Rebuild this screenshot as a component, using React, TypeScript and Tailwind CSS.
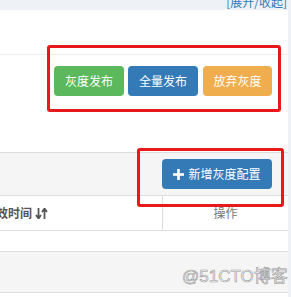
import React from 'react';

const PlusIcon: React.FC = () => (
  <svg width="11" height="11" viewBox="0 0 11 11" className="shrink-0">
    <rect x="4.2" y="0" width="2.6" height="11" fill="#fff" />
    <rect x="0" y="4.2" width="11" height="2.6" fill="#fff" />
  </svg>
);

const SortIcon: React.FC = () => (
  <svg width="13" height="11" viewBox="0 0 13 11" className="shrink-0">
    <path d="M3.5 0v9M1 7l2.5 3.5L6 7" stroke="#555" strokeWidth="1.8" fill="none" />
    <path d="M9.5 11V2M7 4l2.5-3.5L12 4" stroke="#555" strokeWidth="1.8" fill="none" />
  </svg>
);

const App: React.FC = () => {
  const font = "font-['Noto_Sans_CJK_SC','Noto_Sans',sans-serif]";
  return (
    <div className={`relative w-[291px] h-[297px] overflow-hidden bg-[#eef1f5] ${font}`}>
      {/* top bar with clipped toggle link */}
      <div className="h-[10px] overflow-hidden flex justify-end pr-[4px]">
        <span className="text-[12px] leading-[12px] -mt-[4px] text-[#337ab7]">[展开/收起]</span>
      </div>

      <div className="flex">
        <div className="w-[288px] bg-white">
          <div className="h-[45px] border-b border-[#eee]" />

          <div className="h-[97px] pt-[11px] pr-[16px] flex justify-end items-start">
            <button className="w-[70px] h-[30px] rounded-[4px] bg-[#5cb85c] text-white text-[12px]">灰度发布</button>
            <button className="ml-[4px] w-[70px] h-[30px] rounded-[4px] bg-[#337ab7] text-white text-[12px]">全量发布</button>
            <button className="ml-[5px] w-[69px] h-[30px] rounded-[4px] bg-[#f0ad4e] text-white text-[12px]">放弃灰度</button>
          </div>

          <div className="h-[43px] border-t border-[#ddd] bg-[#f5f5f5] pt-[6px] pr-[16px] flex justify-end items-start">
            <button className="w-[110px] h-[30px] rounded-[4px] bg-[#337ab7] text-white text-[12px] flex items-center justify-center gap-[4px]">
              <PlusIcon />
              <span>新增灰度配置</span>
            </button>
          </div>

          <div className="flex h-[36px] border-y border-[#ddd]">
            <div className="w-[163px] border-r border-[#ddd] flex items-center overflow-hidden">
              <span className="-ml-[16px] flex items-center gap-[3px] text-[12px] font-bold text-[#555] whitespace-nowrap">
                生效时间
                <SortIcon />
              </span>
            </div>
            <div className="flex-1 flex items-center justify-center text-[12px] text-[#777]">操作</div>
          </div>

          <div className="h-[21px] border-b border-[#ddd]" />

          <div className="h-[41px] bg-[#f5f5f5] border-b border-[#ddd]" />
          <div className="h-[10px]" />
        </div>
      </div>

      {/* annotation boxes */}
      <div className="absolute left-[47px] top-[45px] w-[234px] h-[67px] border-[3px] border-[#e8191b] rounded-[3px]" />
      <div className="absolute left-[137px] top-[148px] w-[147px] h-[59px] border-[3px] border-[#e8191b] rounded-[3px]" />

      {/* watermark */}
      <div className="absolute left-[182px] top-[267px] text-[17px] leading-[20px] text-[#f4f4f4] [-webkit-text-stroke:0.6px_#999] font-['Liberation_Sans','Noto_Sans_CJK_SC',sans-serif]">
        @51CTO博客
      </div>
    </div>
  );
};

export default App;
